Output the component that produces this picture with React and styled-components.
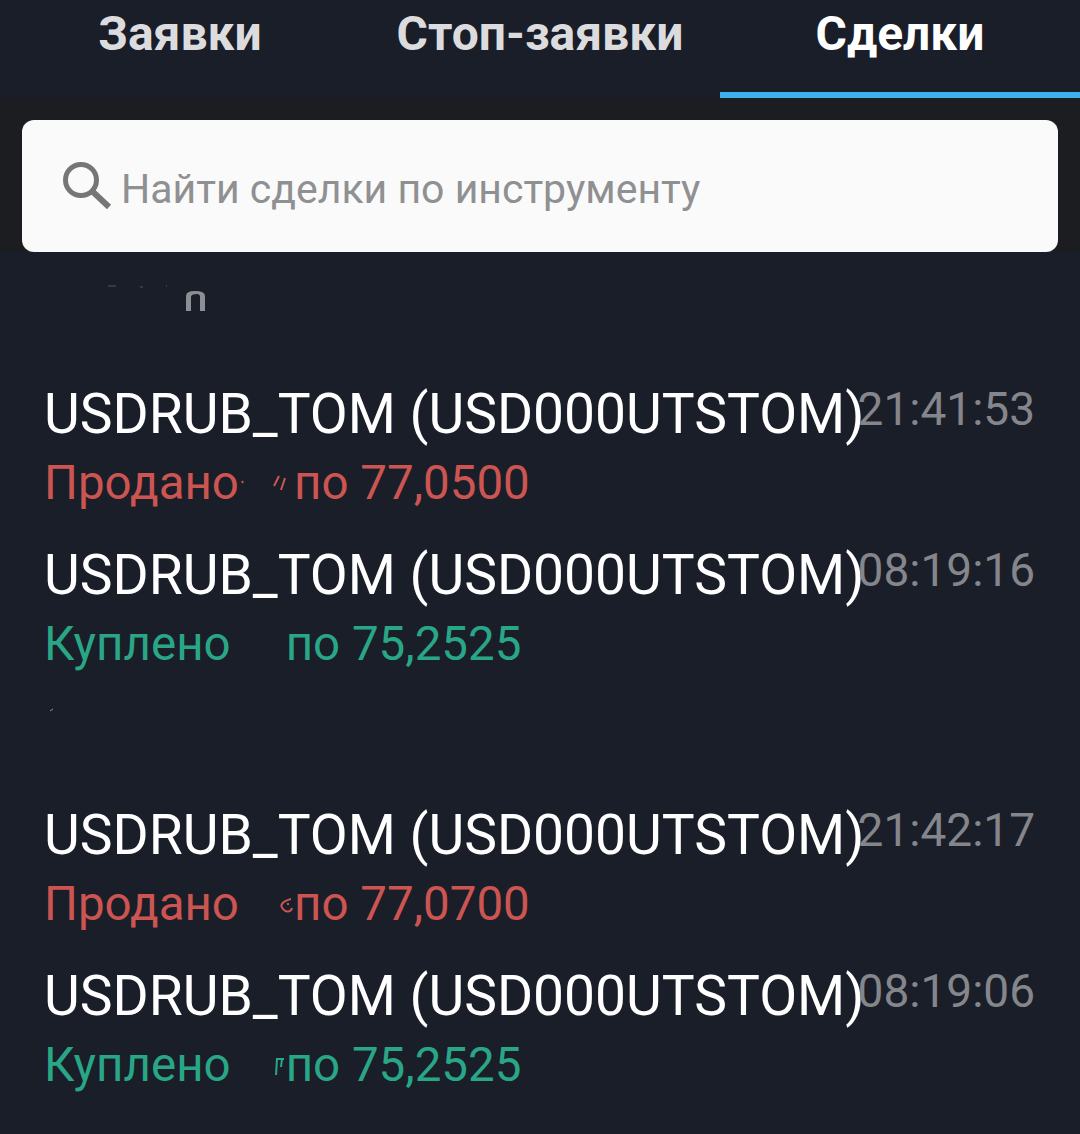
import React from "react";
import styled, { createGlobalStyle } from "styled-components";

const Global = createGlobalStyle`
  html, body { margin: 0; padding: 0; background: #1a1e29; }
  body { font-family: Roboto, "Liberation Sans", sans-serif; }
`;

const Page = styled.div`
  width: 1080px;
  height: 1134px;
  overflow: hidden;
  background: #1a1e29;
  display: flex;
  flex-direction: column;
`;

const Tabs = styled.nav`
  display: grid;
  grid-template-columns: repeat(3, 360px);
  height: 98px;
  flex: none;
`;

const Tab = styled.div`
  display: flex;
  justify-content: center;
  padding-top: 8px;
  box-sizing: border-box;
  font-size: 48px;
  line-height: 52px;
  font-weight: 700;
  color: ${(p) => (p.$active ? "#ffffff" : "#dcdcde")};
  border-bottom: 6px solid ${(p) => (p.$active ? "#3fb0ee" : "transparent")};
`;

const SearchStrip = styled.div`
  flex: none;
  background: #1c1d20;
  padding: 22px 22px 0;
`;

const SearchBox = styled.div`
  height: 132px;
  box-sizing: border-box;
  background: #fafafa;
  border-radius: 12px;
  display: flex;
  align-items: center;
  padding-left: 40px;
  gap: 9px;
  font-size: 41px;
  color: #8f9092;
`;

const Placeholder = styled.span`
  margin-top: 6px;
`;

const List = styled.div`
  flex: 1;
  display: flex;
  flex-direction: column;
  padding: 0 45px 0 44px;
`;

const ClippedRow = styled.div`
  height: 58px;
  padding-top: 32px;
  padding-left: 56px;
  box-sizing: border-box;
`;

const Group = styled.section`
  display: flex;
  flex-direction: column;
  margin-top: ${(p) => p.$top}px;
`;

const Row = styled.article`
  height: 161px;
  display: flex;
  flex-direction: column;
`;

const Head = styled.div`
  display: grid;
  grid-template-columns: minmax(0, 1fr) auto;
  height: 76px;
`;

const Title = styled.div`
  font-size: 55.15px;
  line-height: 76px;
  color: #ffffff;
  white-space: nowrap;
`;

const Time = styled.div`
  font-size: 46px;
  line-height: 66px;
  color: #85868c;
`;

const Sub = styled.div`
  display: flex;
  align-items: center;
  font-size: 47.5px;
  line-height: 62px;
  color: ${(p) => (p.$side === "sell" ? "#cc5551" : "#29a686")};
  white-space: nowrap;
`;

const Blank = styled.span`
  display: inline-flex;
  align-items: center;
  width: ${(p) => p.$w}px;
  height: 40px;
`;

const Speck = styled.div`
  height: 12px;
  padding-left: 5px;
`;

const Search = () => (
  <svg width="50" height="50" viewBox="0 0 50 50" fill="none" stroke="#767678" strokeWidth="5">
    <circle cx="19" cy="19" r="15.5" />
    <path d="M30 30 L47 46" strokeWidth="6" />
  </svg>
);

const Trace = ({ d, color, w }) => (
  <svg width={w} height="28" viewBox={`0 0 ${w} 28`} fill="none" stroke={color} strokeWidth="2">
    <path d={d} />
  </svg>
);

const rows = {
  a: [
    { time: "21:41:53", side: "sell", status: "Продано", price: "по 77,0500", w: 55, trace: "M3 12 L4 14 M40 7 L35 17 M46 9 L42 21" },
    { time: "08:19:16", side: "buy", status: "Куплено", price: "по 75,2525", w: 55, trace: "" },
  ],
  b: [
    { time: "21:42:17", side: "sell", status: "Продано", price: "по 77,0700", w: 55, trace: "M52 9 C44 11 40 15 44 19 C47 23 52 22 53 18 M49 13 L49 15" },
    { time: "08:19:06", side: "buy", status: "Куплено", price: "по 75,2525", w: 55, trace: "M46 8 L45 24 M51 8 L50 16 M45 8 L53 8" },
  ],
};

const Deal = ({ time, side, status, price, w, trace }) => (
  <Row>
    <Head>
      <Title>USDRUB_TOM (USD000UTSTOM)</Title>
      <Time>{time}</Time>
    </Head>
    <Sub $side={side}>
      {status}
      <Blank $w={w}>
        {trace && <Trace w={w} d={trace} color={side === "sell" ? "#cc5551" : "#29a686"} />}
      </Blank>
      {price}
    </Sub>
  </Row>
);

export default function App() {
  return (
    <Page>
      <Global />
      <Tabs>
        <Tab>Заявки</Tab>
        <Tab>Стоп-заявки</Tab>
        <Tab $active>Сделки</Tab>
      </Tabs>
      <SearchStrip>
        <SearchBox>
          <Search />
          <Placeholder>Найти сделки по инструменту</Placeholder>
        </SearchBox>
      </SearchStrip>
      <List>
        <ClippedRow>
          <svg width="110" height="28" viewBox="0 0 110 28">
            <path d="M8 2 H16 M40 3 H43 M66 2 H67" stroke="#55565c" strokeWidth="1" />
            <path d="M86 27 V12 Q86 7 95 7 Q105 7 105 12 V27 H100 V13 Q100 10 97 10 Q91 10 91 13 V27 Z" fill="#8d8e94" />
          </svg>
        </ClippedRow>
        <Group $top={66}>
          {rows.a.map((r) => (
            <Deal key={r.time} {...r} />
          ))}
        </Group>
        <Speck>
          <svg width="6" height="6" viewBox="0 0 6 6" stroke="#8d8e94" strokeWidth="1">
            <path d="M1 4 L4 2" />
          </svg>
        </Speck>
        <Group $top={87}>
          {rows.b.map((r) => (
            <Deal key={r.time} {...r} />
          ))}
        </Group>
      </List>
    </Page>
  );
}
